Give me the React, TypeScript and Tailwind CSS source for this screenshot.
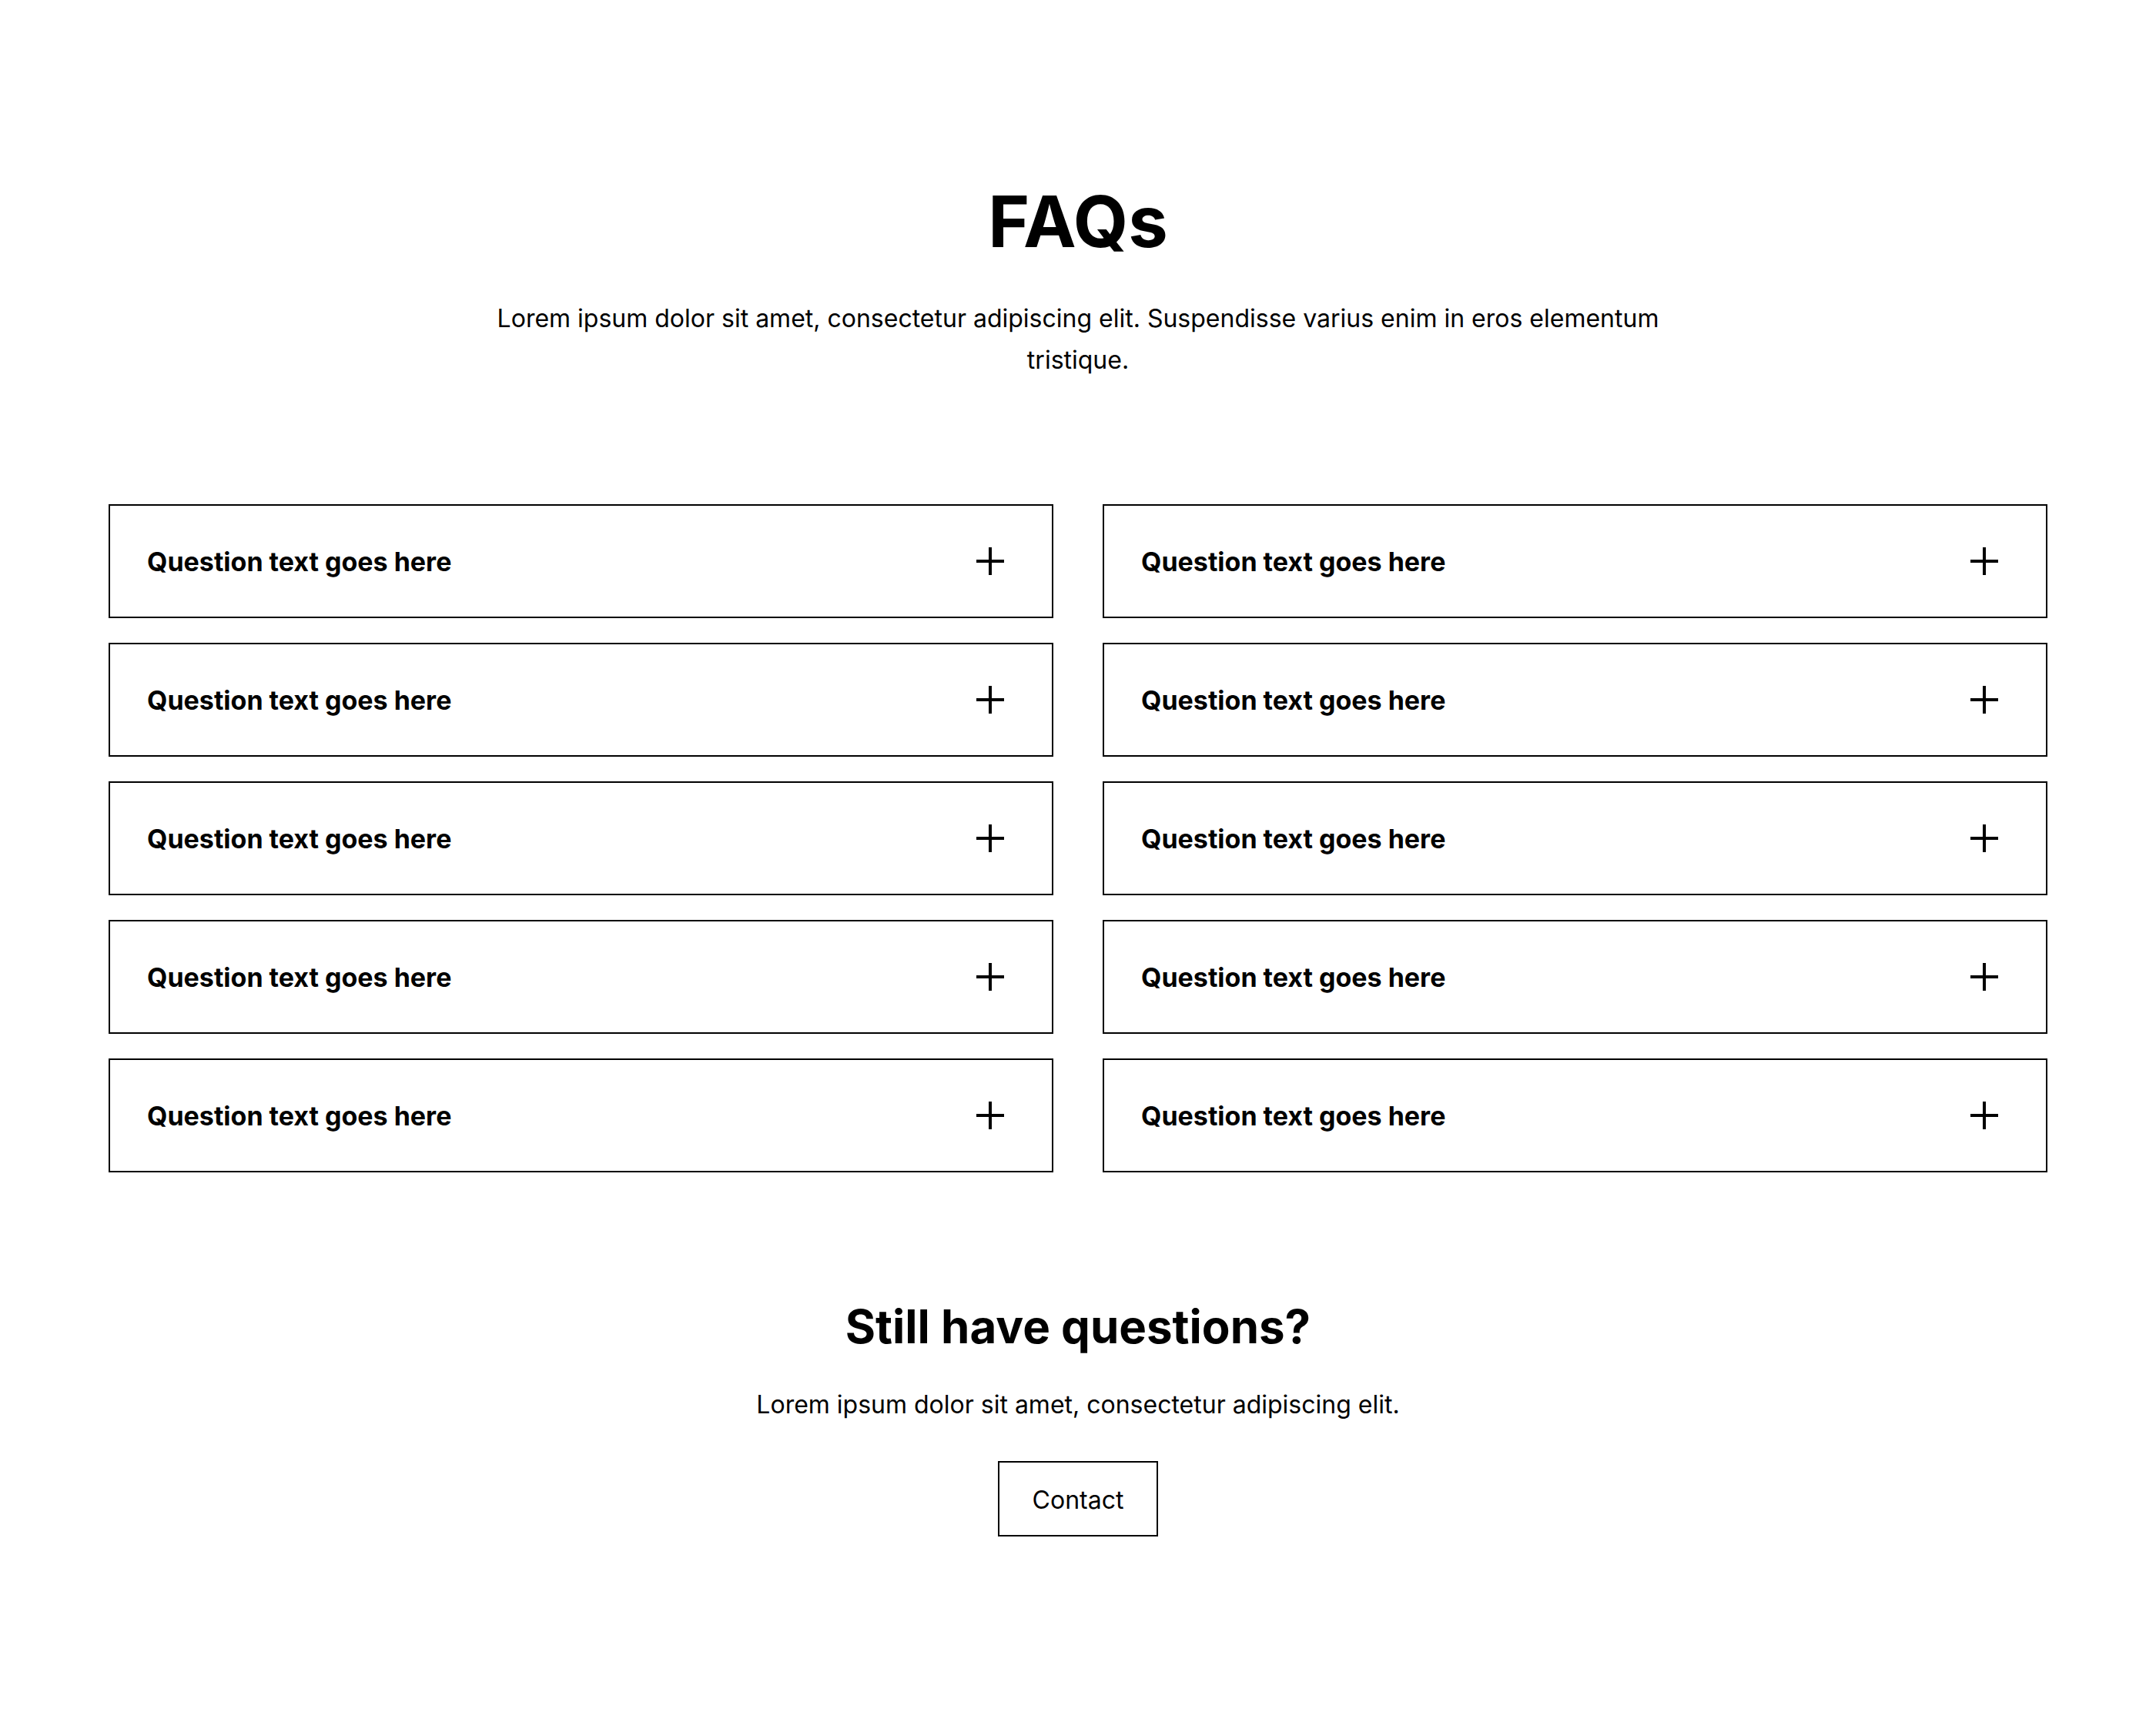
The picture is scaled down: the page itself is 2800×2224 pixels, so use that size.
const questions = Array.from({ length: 10 }, () => "Question text goes here");

function PlusIcon() {
  return (
    <svg width="36" height="36" viewBox="0 0 36 36" fill="none" className="shrink-0">
      <path d="M18 0v36M0 18h36" stroke="black" strokeWidth="4" />
    </svg>
  );
}

export default function App() {
  return (
    <div className="min-h-screen bg-white font-['Inter',sans-serif] text-black">
      <section className="px-[141px] pt-[233px] pb-[200px]">
        <div className="mx-auto max-w-[1536px] text-center">
          <h2 className="text-[92px] font-bold leading-[1.2]">FAQs</h2>
          <p className="mt-[44px] text-[32px] leading-[54px]">
            Lorem ipsum dolor sit amet, consectetur adipiscing elit. Suspendisse varius enim in eros
            elementum tristique.
          </p>
        </div>

        <div className="mt-[160px] grid grid-cols-2 gap-x-[64px] gap-y-[32px]">
          {questions.map((q, i) => (
            <button
              key={i}
              className="flex h-[148px] items-center justify-between border-2 border-black pl-[48px] pr-[62px] text-left"
            >
              <span className="text-[34px] font-bold leading-[1.5]">{q}</span>
              <PlusIcon />
            </button>
          ))}
        </div>

        <div className="mt-[164px] flex flex-col items-center text-center">
          <h3 className="text-[60px] font-bold leading-[1.2]">Still have questions?</h3>
          <p className="mt-[39px] text-[32px] leading-[54px]">
            Lorem ipsum dolor sit amet, consectetur adipiscing elit.
          </p>
          <button className="mt-[46px] border-2 border-black px-[43px] pt-[25px] pb-[21px] text-[32px] leading-[48px]">
            Contact
          </button>
        </div>
      </section>
    </div>
  );
}
